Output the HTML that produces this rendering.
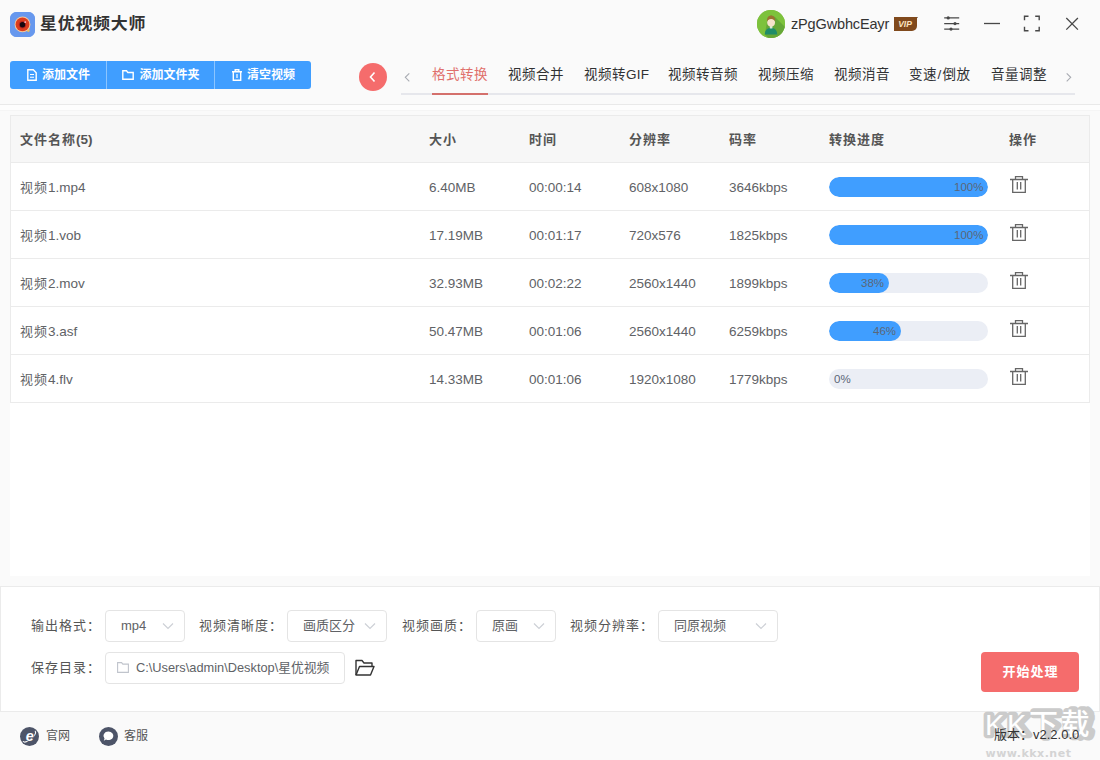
<!DOCTYPE html>
<html lang="zh-CN">
<head>
<meta charset="utf-8">
<title>星优视频大师</title>
<style>
*{box-sizing:border-box;margin:0;padding:0}
html,body{width:1100px;height:760px;overflow:hidden}
body{position:relative;background:#fafafa;font-family:"Liberation Sans","Noto Sans CJK SC",sans-serif;font-size:13px;color:#606266}
.abs{position:absolute}
svg{display:block}
/* title bar */
#logo{left:10px;top:12px;width:25px;height:25px;border-radius:6.500px;background:#6798ee;overflow:hidden}
#title{left:40px;top:11px;height:26px;line-height:26px;font-size:16px;font-weight:700;color:#333;letter-spacing:0.7px;transform:scaleX(1.06);transform-origin:0 0;white-space:nowrap}
#avatar{left:757px;top:10px;width:28px;height:28px;border-radius:50%;background:#7cb342;overflow:hidden}
#uname{left:791px;top:12px;height:24px;line-height:24px;font-size:14.5px;letter-spacing:-0.15px;color:#333;white-space:nowrap}
#vip{left:894px;top:17px;width:23px;height:13.600px;background:#80491c;border-radius:0 0 5px 0;color:#fbe3c0;font-size:8.500px;font-weight:700;font-style:italic;line-height:14px;text-align:center;letter-spacing:0;padding-right:1px}
#vip:after{content:"";position:absolute;left:23px;top:0.400px;border-left:1.500px solid #2a1a10;border-bottom:1.500px solid transparent}
/* toolbar */
#btns{left:10px;top:61px;width:301px;height:27.500px;border-radius:3px;background:#409eff;display:flex;color:#fff;font-size:12px;font-weight:700}
#btns .b{height:27.500px;line-height:27px;padding-top:1px;padding-left:1px;display:flex;align-items:center;justify-content:center;white-space:nowrap}
#btns .b svg{margin-right:5px;margin-top:-1px}
#btns .sep{width:1px;background:#8cc5ff;height:27.500px}
#back{left:359px;top:63px;width:28px;height:28px;border-radius:50%;background:#f56c6c}
.tab{top:64px;height:22px;line-height:22px;font-size:13.500px;letter-spacing:0.500px;color:#303133;white-space:nowrap}
.tab b{font-weight:400;letter-spacing:0.2px;font-size:13.500px}
#tabline{left:401px;top:93px;width:674px;height:2px;background:#e6e7ec}
#tabact{left:432px;top:92.500px;width:56px;height:2.500px;background:#d4706c}
#hline{left:0;top:104px;width:1100px;height:1px;background:#e9e9e9}
#hband{left:0;top:105px;width:1100px;height:5px;background:#fdfdfd;border-bottom:1px solid #f5f5f5;box-sizing:content-box}
/* table */
#panel{left:10px;top:115px;width:1080px;height:461px;background:#fff}
#table{left:10px;top:115px;width:1080px;height:288px;border:1px solid #ebebeb;background:#fff}
#thead{left:0;top:0;width:1078px;height:47px;background:#f7f7f7;border-bottom:1px solid #ebebeb}
.th{top:0;height:47px;line-height:47px;font-size:13px;letter-spacing:1px;font-weight:700;color:#555;white-space:nowrap}
.th b,.td b{font-weight:inherit;letter-spacing:0;font-size:13.5px}
.row{left:0;width:1078px;height:48px;border-bottom:1px solid #ebebeb}
.row:last-child{border-bottom:none}
.td{top:1px;height:48px;line-height:48px;font-size:13.5px;color:#606266;white-space:nowrap}
.td.c1{font-size:13px;letter-spacing:1px}
.c1{left:9px}.c2{left:418px}.c3{left:518px}.c4{left:618px}.c5{left:718px}.c6{left:818px}.c7{left:998px}
.bar{left:818px;top:14px;width:159px;height:20px;border-radius:10px;background:#ebeef5;overflow:hidden}
.bar i{display:block;height:20px;border-radius:10px;background:#409eff}
.pct{top:14px;height:20px;line-height:20px;font-size:11.5px;color:#5b6778}
.trash{left:999px;top:12.5px}
/* bottom */
#bottom{left:0;top:586px;width:1100px;height:126px;background:#fff;border:1px solid #ebebeb}
.lbl{height:20px;line-height:20px;font-size:13px;letter-spacing:1px;color:#555;white-space:nowrap}
.sel{height:32px;border:1px solid #e4e4e4;border-radius:4px;background:#fff;font-size:13px;color:#606266;line-height:30px;white-space:nowrap}
.sel svg{position:absolute;right:10px;top:11px}
#start{left:981px;top:652px;width:98px;height:40px;border-radius:4px;background:#f56c6c;color:#fff;font-size:13px;letter-spacing:1px;padding-left:1px;font-weight:700;line-height:40px;text-align:center}
/* footer */
.ft{font-size:12px;color:#555;line-height:20px;height:20px;white-space:nowrap}
</style>
</head>
<body>
<!-- TITLE BAR -->
<div id="logo" class="abs">
<svg width="25" height="25" viewBox="0 0 25 25"><rect width="25" height="25" fill="#6798ee"/><circle cx="18.300" cy="18.500" r="1.400" fill="#e9bd55"/><circle cx="12.500" cy="12.400" r="7.900" fill="#f6c79a"/><circle cx="12.500" cy="12.400" r="6.900" fill="#dc3c1e"/><circle cx="12.500" cy="12.700" r="3.700" fill="#b5281c"/><circle cx="12.500" cy="12.700" r="2.700" fill="#14060f"/><circle cx="15.200" cy="10.100" r="0.900" fill="#f7c3d2"/></svg>
</div>
<div id="title" class="abs">星优视频大师</div>
<div id="avatar" class="abs">
<svg width="28" height="28" viewBox="0 0 28 28"><rect width="28" height="28" fill="#7dc23c"/><path d="M14 5.500 L18 7 L32 21 L32 32 L15 32 L7.800 24.500 L10.200 11Z" fill="#5f9e36" opacity=".75"/><path d="M7.800 24.500c0-4.500 2.700-6.800 6.200-6.800s6.200 2.300 6.200 6.800z" fill="#1f8c68"/><rect x="12.800" y="15.500" width="2.600" height="3" fill="#d9ead8"/><ellipse cx="14.100" cy="12.600" rx="3.900" ry="4" fill="#f6e2cb"/><path d="M10 11.500c-.3-4 1.600-6 4.100-6s4.400 2 4.100 6c-.8-1.800-2-2.600-4.100-2.600s-3.300.8-4.100 2.600z" fill="#9a7331"/></svg>
</div>
<div id="uname" class="abs">zPgGwbhcEayr</div>
<div id="vip" class="abs">VIP</div>
<svg class="abs" style="left:942px;top:14px" width="20" height="20" viewBox="0 0 20 20" fill="none" stroke="#484848" stroke-width="1.300"><path d="M2.200 3.900h15M2.200 9.600h15M2.200 15.100h15"/><circle cx="6.200" cy="3.900" r="1.600" fill="#484848" stroke="none"/><circle cx="13" cy="9.600" r="1.600" fill="#484848" stroke="none"/><circle cx="9" cy="15.100" r="1.600" fill="#484848" stroke="none"/></svg>
<svg class="abs" style="left:983px;top:14px" width="20" height="20" viewBox="0 0 20 20" fill="none" stroke="#484848" stroke-width="1.300"><path d="M1 9.500h16"/></svg>
<svg class="abs" style="left:1023px;top:15px" width="18" height="18" viewBox="0 0 18 18" fill="none" stroke="#484848" stroke-width="1.400"><path d="M1.500 5.200v-4h4M12.200 1.200h4v4M16.200 11.800v4h-4M5.500 15.800h-4v-4"/></svg>
<svg class="abs" style="left:1062px;top:14px" width="20" height="20" viewBox="0 0 20 20" fill="none" stroke="#484848" stroke-width="1.300"><path d="M4.300 4l11.600 11.600M15.900 4L4.300 15.600"/></svg>

<!-- TOOLBAR -->
<div id="btns" class="abs">
 <div class="b" style="width:96px"><svg width="10" height="12" viewBox="0 0 10 12" fill="none" stroke="#fff" stroke-width="1.400"><path d="M.8 .8h5.500l2.900 2.900v7.500H.8z"/><path d="M3 5.500h4M3 8.200h4" stroke-width="1.100"/></svg>添加文件</div>
 <div class="sep"></div>
 <div class="b" style="width:107px"><svg width="12" height="10" viewBox="0 0 12 10" fill="none" stroke="#fff" stroke-width="1.400"><path d="M.8 .8h3.700l1.300 1.700h5.400v6.700H.8z"/></svg>添加文件夹</div>
 <div class="sep"></div>
 <div class="b" style="width:96px"><svg width="10" height="12" viewBox="0 0 10 12" fill="none" stroke="#fff" stroke-width="1.400"><path d="M0 2.800h10M3.200 2.800V.8h3.600v2M1.300 2.800v8.400h7.400V2.800"/><path d="M5 5v4" stroke-width="1.200"/></svg>清空视频</div>
</div>
<div id="back" class="abs"><svg width="28" height="28" viewBox="0 0 28 28" fill="none" stroke="#fff" stroke-width="1.600"><path d="M15.500 9.500l-4 4.500 4 4.500"/></svg></div>
<svg class="abs" style="left:401px;top:70px" width="12" height="14" viewBox="0 0 12 14" fill="none" stroke="#a8abb2" stroke-width="1.100"><path d="M8.300 3.300L4.300 7.300l4 4.100"/></svg>
<div class="tab abs" style="left:432px;color:#e0706c">格式转换</div>
<div class="tab abs" style="left:508px">视频合并</div>
<div class="tab abs" style="left:584px">视频转<b>GIF</b></div>
<div class="tab abs" style="left:668px">视频转音频</div>
<div class="tab abs" style="left:758px">视频压缩</div>
<div class="tab abs" style="left:834px">视频消音</div>
<div class="tab abs" style="left:909px">变速<b style="padding:0 1px 0 0.5px">/</b>倒放</div>
<div class="tab abs" style="left:991px">音量调整</div>
<svg class="abs" style="left:1063px;top:70px" width="12" height="14" viewBox="0 0 12 14" fill="none" stroke="#a8abb2" stroke-width="1.100"><path d="M3.700 3.300l4 4L3.700 11.400"/></svg>
<div id="tabline" class="abs"></div>
<div id="tabact" class="abs"></div>
<div id="hline" class="abs"></div>
<div id="hband" class="abs"></div>

<!-- TABLE -->
<div id="panel" class="abs"></div>
<div id="table" class="abs">
 <div id="thead" class="abs">
  <div class="th abs c1">文件名称<b>(5)</b></div>
  <div class="th abs c2">大小</div>
  <div class="th abs c3">时间</div>
  <div class="th abs c4">分辨率</div>
  <div class="th abs c5">码率</div>
  <div class="th abs c6">转换进度</div>
  <div class="th abs c7">操作</div>
 </div>
 <div class="row abs" style="top:47px">
  <div class="td abs c1">视频<b>1.mp4</b></div><div class="td abs c2">6.40MB</div><div class="td abs c3">00:00:14</div><div class="td abs c4">608x1080</div><div class="td abs c5">3646kbps</div>
  <div class="bar abs"><i style="width:159px"></i></div><div class="pct abs" style="left:943px">100%</div>
  <svg class="trash abs" width="18" height="17" viewBox="0 0 18 17" fill="none" stroke="#666" stroke-width="1.300"><path d="M0 3.500h18M5.500 3.500v-2.800h7v2.800M2.700 3.500v12.800h12.600v-12.800M7.300 6v7.500M10.700 6v7.500"/></svg>
 </div>
 <div class="row abs" style="top:95px">
  <div class="td abs c1">视频<b>1.vob</b></div><div class="td abs c2">17.19MB</div><div class="td abs c3">00:01:17</div><div class="td abs c4">720x576</div><div class="td abs c5">1825kbps</div>
  <div class="bar abs"><i style="width:159px"></i></div><div class="pct abs" style="left:943px">100%</div>
  <svg class="trash abs" width="18" height="17" viewBox="0 0 18 17" fill="none" stroke="#666" stroke-width="1.300"><path d="M0 3.500h18M5.500 3.500v-2.800h7v2.800M2.700 3.500v12.800h12.600v-12.800M7.300 6v7.500M10.700 6v7.500"/></svg>
 </div>
 <div class="row abs" style="top:143px">
  <div class="td abs c1">视频<b>2.mov</b></div><div class="td abs c2">32.93MB</div><div class="td abs c3">00:02:22</div><div class="td abs c4">2560x1440</div><div class="td abs c5">1899kbps</div>
  <div class="bar abs"><i style="width:60px"></i></div><div class="pct abs" style="left:850px">38%</div>
  <svg class="trash abs" width="18" height="17" viewBox="0 0 18 17" fill="none" stroke="#666" stroke-width="1.300"><path d="M0 3.500h18M5.500 3.500v-2.800h7v2.800M2.700 3.500v12.800h12.600v-12.800M7.300 6v7.500M10.700 6v7.500"/></svg>
 </div>
 <div class="row abs" style="top:191px">
  <div class="td abs c1">视频<b>3.asf</b></div><div class="td abs c2">50.47MB</div><div class="td abs c3">00:01:06</div><div class="td abs c4">2560x1440</div><div class="td abs c5">6259kbps</div>
  <div class="bar abs"><i style="width:72px"></i></div><div class="pct abs" style="left:862px">46%</div>
  <svg class="trash abs" width="18" height="17" viewBox="0 0 18 17" fill="none" stroke="#666" stroke-width="1.300"><path d="M0 3.500h18M5.500 3.500v-2.800h7v2.800M2.700 3.500v12.800h12.600v-12.800M7.300 6v7.500M10.700 6v7.500"/></svg>
 </div>
 <div class="row abs" style="top:239px">
  <div class="td abs c1">视频<b>4.flv</b></div><div class="td abs c2">14.33MB</div><div class="td abs c3">00:01:06</div><div class="td abs c4">1920x1080</div><div class="td abs c5">1779kbps</div>
  <div class="bar abs"><i style="width:0"></i></div><div class="pct abs" style="left:823px">0%</div>
  <svg class="trash abs" width="18" height="17" viewBox="0 0 18 17" fill="none" stroke="#666" stroke-width="1.300"><path d="M0 3.500h18M5.500 3.500v-2.800h7v2.800M2.700 3.500v12.800h12.600v-12.800M7.300 6v7.500M10.700 6v7.500"/></svg>
 </div>
</div>

<!-- BOTTOM PANEL -->
<div id="bottom" class="abs"></div>
<div class="lbl abs" style="left:31px;top:616px">输出格式：</div>
<div class="sel abs" style="left:105px;top:610px;width:80px;padding-left:15px">mp4<svg width="12" height="8" viewBox="0 0 12 8" fill="none" stroke="#cdd0d6" stroke-width="1.200"><path d="M1 1.500l5 5 5-5"/></svg></div>
<div class="lbl abs" style="left:199px;top:616px">视频清晰度：</div>
<div class="sel abs" style="left:287px;top:610px;width:100px;padding-left:15px">画质区分<svg width="12" height="8" viewBox="0 0 12 8" fill="none" stroke="#cdd0d6" stroke-width="1.200"><path d="M1 1.500l5 5 5-5"/></svg></div>
<div class="lbl abs" style="left:402px;top:616px">视频画质：</div>
<div class="sel abs" style="left:476px;top:610px;width:80px;padding-left:15px">原画<svg width="12" height="8" viewBox="0 0 12 8" fill="none" stroke="#cdd0d6" stroke-width="1.200"><path d="M1 1.500l5 5 5-5"/></svg></div>
<div class="lbl abs" style="left:570px;top:616px">视频分辨率：</div>
<div class="sel abs" style="left:658px;top:610px;width:120px;padding-left:15px">同原视频<svg width="12" height="8" viewBox="0 0 12 8" fill="none" stroke="#cdd0d6" stroke-width="1.200"><path d="M1 1.500l5 5 5-5"/></svg></div>
<div class="lbl abs" style="left:31px;top:658px">保存目录：</div>
<div class="sel abs" style="left:105px;top:652px;width:240px"><div class="abs" style="left:30px;top:0;width:194px;height:30px;overflow:hidden;font-size:12.800px">C:\Users\admin\Desktop\星优视频</div></div>
<svg class="abs" style="left:117px;top:662px" width="12" height="11" viewBox="0 0 12 11" fill="none" stroke="#c0c4cc" stroke-width="1.100"><path d="M.6 .6h4l1.200 1.500h5.600v8.300H.6z"/></svg>
<svg class="abs" style="left:355px;top:659px" width="20" height="18" viewBox="0 0 20 18" fill="none" stroke="#333" stroke-width="1.400" stroke-linejoin="round"><path d="M1 16V1.500h6l2 2.500h8v3.500"/><path d="M1 16l3.500-8.500H19L15.500 16z"/></svg>
<div id="start" class="abs">开始处理</div>

<!-- FOOTER -->
<svg class="abs" style="left:20px;top:726.500px" width="19" height="19" viewBox="0 0 19 19"><circle cx="9.500" cy="9.500" r="9.500" fill="#4d5468"/><path d="M15.300 4.300c1.300 1.600-1.200 5.400-5.200 8.300-3 2.200-5.800 3-6.800 1.900" fill="none" stroke="#fff" stroke-width="1.100" stroke-linecap="round"/><text x="9.700" y="14.200" font-family="Liberation Sans, sans-serif" font-size="14.500" font-weight="700" font-style="italic" fill="#fff" stroke="#4d5468" stroke-width="1.600" paint-order="stroke" text-anchor="middle">e</text></svg>
<div class="ft abs" style="left:46px;top:726px">官网</div>
<svg class="abs" style="left:99px;top:726.500px" width="19" height="19" viewBox="0 0 19 19"><circle cx="9.500" cy="9.500" r="9.500" fill="#4d5468"/><path d="M9.500 4.500a5 4.300 0 1 1-2.500 8.100L4.800 13.800l.7-2.300A5 4.300 0 0 1 9.500 4.500z" fill="#fff"/></svg>
<div class="ft abs" style="left:124px;top:726px">客服</div>
<!-- watermark -->
<svg class="abs" style="left:975px;top:700px" width="125" height="60" viewBox="0 0 125 60">
<g font-family="Liberation Sans, Noto Sans CJK SC, sans-serif" font-weight="700" font-size="29">
<text x="10" y="35" fill="#cbcbcb" stroke="#cbcbcb" stroke-width="6.500" stroke-linejoin="round" letter-spacing="2.600">KK下载</text>
<text x="10" y="35" fill="#fff" font-weight="500" letter-spacing="2.600">KK下载</text>
</g>
<text x="10.500" y="56.500" font-family="DejaVu Sans, Liberation Sans, sans-serif" font-weight="700" font-size="11" letter-spacing="0.5" fill="#d4d4d4">www.kkx.net</text>
</svg>
<div class="ft abs" style="left:994px;top:725px;font-size:13px;color:#333">版本：v2.2.0.0</div>
</body>
</html>
